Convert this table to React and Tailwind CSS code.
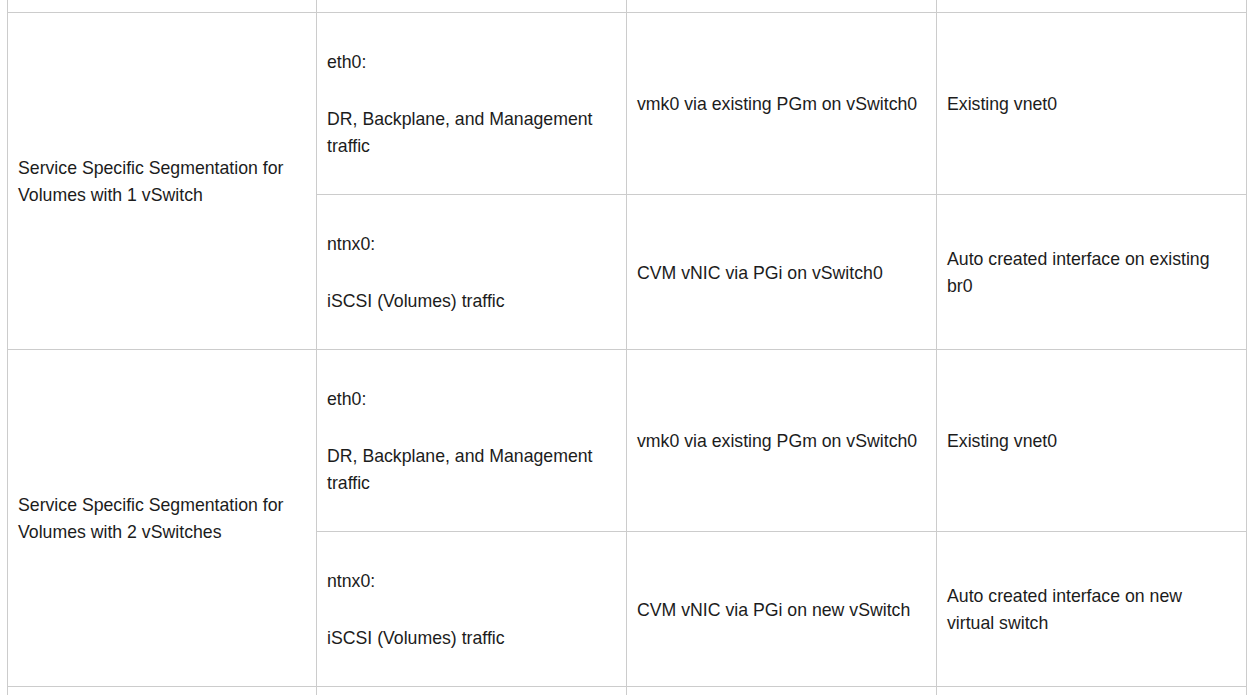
import React from "react";

const cell = "border border-[#cccccc] align-middle pl-[10px] pr-[14px] pt-[36px] pb-[34px] text-left font-normal";

function Iface({ name, desc }) {
  return (
    <div>
      <p className="mb-[30px]">{name}</p>
      <p>{desc}</p>
    </div>
  );
}

function Group({ title, second }) {
  return (
    <>
      <tr>
        <td rowSpan={2} className={cell}>{title}</td>
        <td className={cell}>
          <Iface name="eth0:" desc="DR, Backplane, and Management traffic" />
        </td>
        <td className={cell}>vmk0 via existing PGm on vSwitch0</td>
        <td className={cell}>Existing vnet0</td>
      </tr>
      <tr>
        <td className={cell}>
          <Iface name="ntnx0:" desc="iSCSI (Volumes) traffic" />
        </td>
        <td className={cell}>{second.pg}</td>
        <td className={cell}>{second.iface}</td>
      </tr>
    </>
  );
}

export default function App() {
  return (
    <div className="w-[1255px] h-[695px] overflow-hidden bg-white">
      <div className="-mt-[20px] pl-[7px]">
        <table
          className="table-fixed border-collapse text-[17.7px] leading-[27px] text-[#1c1c1c]"
          style={{ width: 1240, fontFamily: '"Liberation Sans", Arial, sans-serif' }}
        >
          <colgroup>
            <col className="w-[309px]" />
            <col className="w-[310px]" />
            <col className="w-[310px]" />
            <col className="w-[310px]" />
          </colgroup>
          <tbody>
            <tr>
              <td className="border border-[#cccccc] h-[32px]"></td>
              <td className="border border-[#cccccc] h-[32px]"></td>
              <td className="border border-[#cccccc] h-[32px]"></td>
              <td className="border border-[#cccccc] h-[32px]"></td>
            </tr>
            <Group
              title="Service Specific Segmentation for Volumes with 1 vSwitch"
              second={{ pg: "CVM vNIC via PGi on vSwitch0", iface: "Auto created interface on existing br0" }}
            />
            <Group
              title="Service Specific Segmentation for Volumes with 2 vSwitches"
              second={{ pg: "CVM vNIC via PGi on new vSwitch", iface: "Auto created interface on new virtual switch" }}
            />
            <tr>
              <td className="border border-[#cccccc] h-[60px]"></td>
              <td className="border border-[#cccccc] h-[60px]"></td>
              <td className="border border-[#cccccc] h-[60px]"></td>
              <td className="border border-[#cccccc] h-[60px]"></td>
            </tr>
          </tbody>
        </table>
      </div>
    </div>
  );
}
